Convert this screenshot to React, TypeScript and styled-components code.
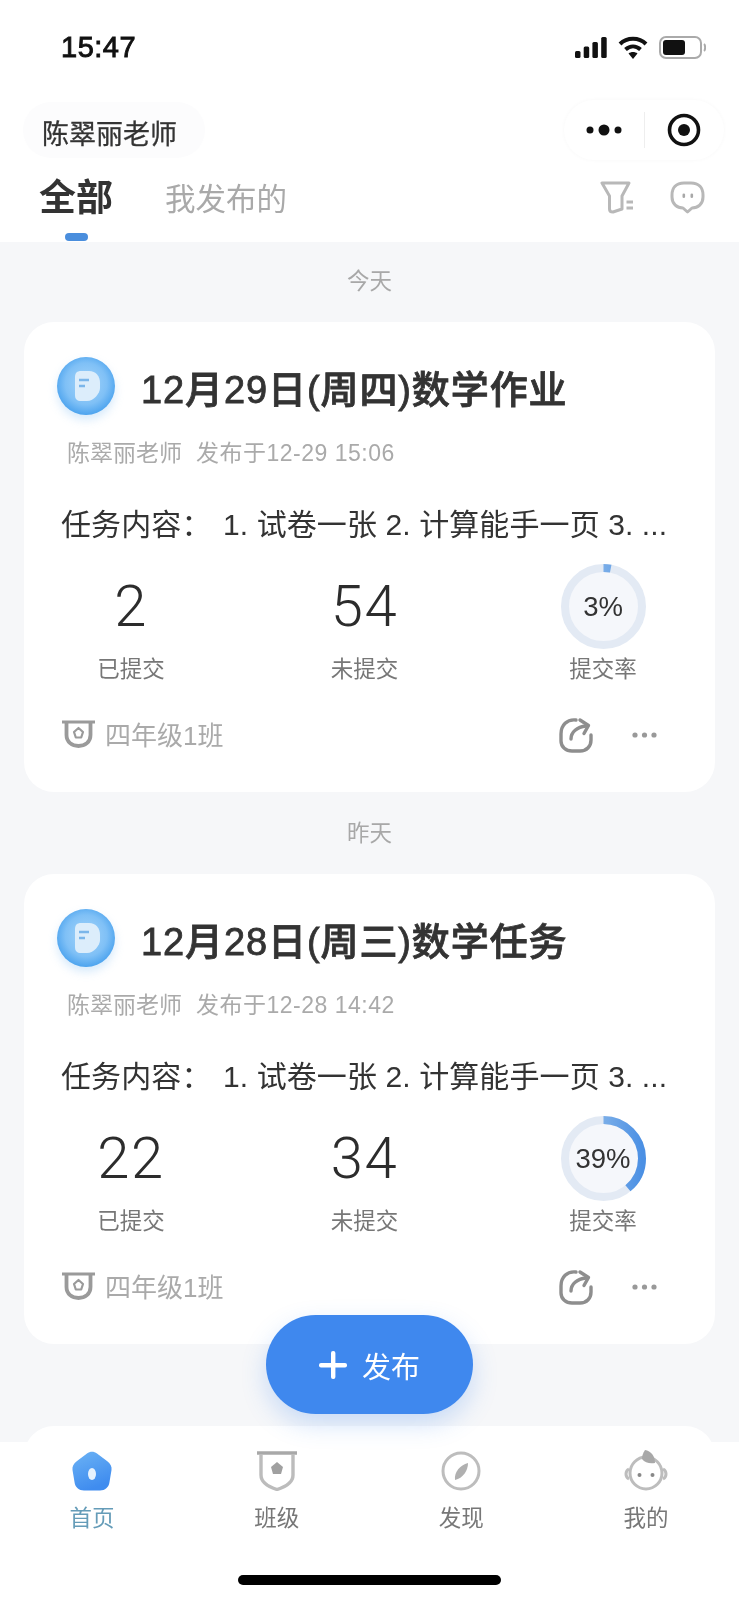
import React from 'react';
import styled, { createGlobalStyle } from 'styled-components';

const GlobalStyle = createGlobalStyle`
  html, body {
    margin: 0;
    padding: 0;
    background: #fff;
    font-family: 'Liberation Sans', 'Noto Sans CJK SC', sans-serif;
  }
`;

const Page = styled.div`
  position: relative;
  width: 739px;
  height: 1600px;
  overflow: hidden;
  display: flex;
  flex-direction: column;
  background: #f6f7f9;
  filter: blur(0.4px);
`;

const Header = styled.header`
  flex: none;
  height: 242px;
  background: #fff;
  display: flex;
  flex-direction: column;
`;

const StatusBar = styled.div`
  height: 100px;
  padding: 0 33px 6px 61px;
  box-sizing: border-box;
  display: flex;
  align-items: center;
  justify-content: space-between;
`;

const Clock = styled.span`
  font-size: 29px;
  font-weight: 500;
  letter-spacing: 0.5px;
  color: #111;
  -webkit-text-stroke: 0.9px #111;
`;

const StatusIcons = styled.div`
  display: flex;
  align-items: center;
  gap: 11px;
`;

const NavRow = styled.div`
  height: 60px;
  padding: 0 15px 0 23px;
  display: flex;
  align-items: center;
  justify-content: space-between;
`;

const NamePill = styled.div`
  width: 182px;
  height: 56px;
  padding: 5px 0 0 19px;
  box-sizing: border-box;
  border-radius: 28px;
  background: #fcfcfd;
  display: flex;
  align-items: center;
  font-size: 27px;
  color: #333;
  -webkit-text-stroke: 0.3px #333;
`;

const Capsule = styled.div`
  width: 160px;
  height: 60px;
  border-radius: 30px;
  background: #fff;
  box-shadow: 0 0 4px rgba(0, 0, 0, 0.03);
  display: flex;
  align-items: center;
`;

const CapsuleSide = styled.div`
  flex: 1;
  display: flex;
  align-items: center;
  justify-content: center;
`;

const CapsuleDivider = styled.div`
  width: 1px;
  height: 36px;
  background: #eee;
`;

const TabsRow = styled.div`
  flex: 1;
  padding: 15px 34px 0 39px;
  display: flex;
  align-items: flex-start;
  justify-content: space-between;
`;

const Tabs = styled.div`
  display: flex;
  gap: 52px;
`;

const Tab = styled.div<{ $active?: boolean }>`
  display: flex;
  flex-direction: column;
  align-items: center;
  height: 48px;
  line-height: 48px;
  font-size: ${({ $active }) => ($active ? '37px' : '30.5px')};
  font-weight: ${({ $active }) => ($active ? 700 : 400)};
  color: ${({ $active }) => ($active ? '#333' : '#a9a9a9')};
`;

const TabMark = styled.i`
  flex: none;
  width: 23px;
  height: 8px;
  margin-top: 10px;
  border-radius: 4px;
  background: #4a8edd;
`;

const TabTools = styled.div`
  display: flex;
  gap: 36px;
  padding-top: 6px;
`;

const Feed = styled.main`
  flex: 1;
  min-height: 0;
  overflow: hidden;
  padding: 25px 24px 0;
`;

const DateLabel = styled.div`
  height: 30px;
  line-height: 30px;
  margin: 0 0 25px;
  text-align: center;
  font-size: 22.5px;
  color: #a8a8a8;
`;

const Card = styled.article<{ $gap?: number }>`
  height: ${({ $gap }) => ($gap ? '200px' : 'auto')};
  margin-top: ${({ $gap }) => $gap ?? 0}px;
  margin-bottom: 27px;
  padding: 35px 0 39px;
  box-sizing: ${({ $gap }) => ($gap ? 'border-box' : 'content-box')};
  border-radius: 30px;
  background: #fff;
`;

const CardHead = styled.div`
  height: 58px;
  padding-left: 33px;
  display: flex;
  align-items: center;
  gap: 26px;
`;

const BadgeIcon = styled.svg`
  flex: none;
  overflow: visible;
  filter: drop-shadow(0 5px 5px rgba(74, 160, 238, 0.22));
`;

const CardTitle = styled.h2`
  margin: 0;
  font-size: 38px;
  font-weight: 500;
  letter-spacing: 0.9px;
  white-space: nowrap;
  color: #333;
  -webkit-text-stroke: 0.8px #333;
`;

const CardMeta = styled.div`
  height: 30px;
  line-height: 30px;
  margin: 23px 0 0 43px;
  display: flex;
  font-size: 23px;
  white-space: nowrap;
  color: #aaa;
`;

const PublishedAt = styled.span`
  margin-left: 14px;
  letter-spacing: 0.5px;
`;

const CardBody = styled.div`
  height: 40px;
  line-height: 40px;
  margin: 37px 0 0 37px;
  display: flex;
  font-size: 30px;
  letter-spacing: 0.1px;
  white-space: nowrap;
  color: #333;
`;

const BodyLabel = styled.span`
  width: 162px;
  flex: none;
`;

const Stats = styled.div`
  margin-top: 19px;
  padding-left: 47px;
  display: grid;
  grid-template-columns: 233.5px 238.5px 120px;
`;

const Stat = styled.div`
  width: 120px;
  display: flex;
  flex-direction: column;
  align-items: center;
`;

const StatValue = styled.div`
  height: 85px;
  line-height: 85px;
  font-family: Roboto, 'Liberation Sans', sans-serif;
  font-size: 58px;
  font-weight: 300;
  letter-spacing: 1.5px;
  color: #2c2c2c;
`;

const StatLabel = styled.div`
  height: 30px;
  line-height: 30px;
  margin-top: 6px;
  font-size: 22.5px;
  color: #777;
`;

const Ring = styled.div`
  width: 85px;
  height: 85px;
  display: grid;
  place-items: center;
  & > * {
    grid-area: 1 / 1;
  }
`;

const RingValue = styled.span`
  font-size: 27.5px;
  color: #333;
`;

const CardFoot = styled.div`
  height: 36px;
  margin-top: 32px;
  padding: 0 58px 0 38px;
  display: flex;
  align-items: center;
  justify-content: space-between;
`;

const ClassTag = styled.div`
  display: flex;
  align-items: center;
  gap: 10px;
  margin-top: -3px;
  font-size: 26px;
  color: #aaa;
`;

const CardActions = styled.div`
  display: flex;
  align-items: center;
  gap: 38px;
`;

const PublishButton = styled.button`
  position: absolute;
  left: 266px;
  top: 1315px;
  width: 207px;
  height: 99px;
  padding: 0;
  border: 0;
  border-radius: 50px;
  background: #3f88ee;
  box-shadow: 0 10px 24px rgba(63, 136, 238, 0.25);
  display: flex;
  align-items: center;
  justify-content: center;
  gap: 15px;
  font-family: inherit;
  font-size: 29px;
  color: #fff;
`;

const TabBar = styled.nav`
  flex: none;
  position: relative;
  height: 158px;
  background: #fff;
  padding: 8px 47px 0 46px;
  box-sizing: border-box;
  display: flex;
  justify-content: space-between;
  align-items: flex-start;
`;

const TabItem = styled.div<{ $active?: boolean }>`
  width: 92px;
  display: flex;
  flex-direction: column;
  align-items: center;
  font-size: 22.5px;
  color: ${({ $active }) => ($active ? '#659cb8' : '#777')};
`;

const TabItemIcon = styled.div`
  height: 42px;
  display: flex;
  align-items: center;
  margin-bottom: 8px;
`;

const HomeIndicator = styled.div`
  position: absolute;
  left: 238px;
  bottom: 15px;
  width: 263px;
  height: 10px;
  border-radius: 5px;
  background: #000;
`;

const SignalIcon = () => (
  <svg width="32" height="21" viewBox="0 0 32 21">
    <rect x="0" y="14" width="5.5" height="7" rx="1.5" fill="#111" />
    <rect x="8.7" y="9.5" width="5.5" height="11.5" rx="1.5" fill="#111" />
    <rect x="17.4" y="5" width="5.5" height="16" rx="1.5" fill="#111" />
    <rect x="26.2" y="0" width="5.5" height="21" rx="1.5" fill="#111" />
  </svg>
);

const WifiIcon = () => (
  <svg width="30" height="23" viewBox="0 0 30 23" fill="none" stroke="#111" strokeWidth="4">
    <path d="M2 8 C9 1 21 1 28 8" />
    <path d="M7.5 13.5 C12 9.5 18 9.5 22.5 13.5" />
    <path d="M15 23 L10.5 17.5 C13 15.5 17 15.5 19.5 17.5 Z" fill="#111" stroke="none" />
  </svg>
);

const BatteryIcon = () => (
  <svg width="47" height="23" viewBox="0 0 47 23" fill="none">
    <rect x="1" y="1" width="41" height="21" rx="6" stroke="#aaa" strokeWidth="2" />
    <rect x="4" y="4" width="22" height="15" rx="3" fill="#111" />
    <path d="M45 8 C46.5 9 46.5 14 45 15" stroke="#aaa" strokeWidth="2" />
  </svg>
);

const MoreDotsIcon = () => (
  <svg width="36" height="14" viewBox="0 0 36 14" fill="#111">
    <circle cx="4" cy="7" r="3.5" />
    <circle cx="18" cy="7" r="5.5" />
    <circle cx="32" cy="7" r="3.5" />
  </svg>
);

const TargetIcon = () => (
  <svg width="34" height="34" viewBox="0 0 34 34">
    <circle cx="17" cy="17" r="14.5" fill="none" stroke="#111" strokeWidth="3.6" />
    <circle cx="17" cy="17" r="6" fill="#111" />
  </svg>
);

const FilterIcon = () => (
  <svg width="34" height="33" viewBox="0 0 34 33" fill="none" stroke="#b8b8b8" strokeWidth="3" strokeLinejoin="round">
    <path d="M2 2 H29 L22 15 V28 L13 31 C11 31 9.5 30 9.5 28 V15 Z" />
    <path d="M26.5 21 H33 M26.5 27 H33" />
  </svg>
);

const ChatIcon = () => (
  <svg width="35" height="33" viewBox="0 0 35 33" fill="none">
    <path
      d="M14 2 H21 C29 2 33 7 33 14 V16 C33 23 28 27 22 27 L17.5 31 L13 27 C7 27 2 23 2 16 V14 C2 7 6 2 14 2 Z"
      stroke="#b8b8b8"
      strokeWidth="3"
      strokeLinejoin="round"
    />
    <rect x="12.5" y="12.5" width="2.6" height="4.5" rx="1.3" fill="#a8a8a8" />
    <rect x="20.5" y="12.5" width="2.6" height="4.5" rx="1.3" fill="#a8a8a8" />
  </svg>
);

const DocBadge = ({ id }: { id: string }) => (
  <BadgeIcon width="58" height="58" viewBox="0 0 58 58">
    <defs>
      <radialGradient id={id} cx="50%" cy="46%" r="55%">
        <stop offset="0%" stopColor="#a5d5fa" />
        <stop offset="65%" stopColor="#7fc0f6" />
        <stop offset="100%" stopColor="#4aa2ee" />
      </radialGradient>
    </defs>
    <circle cx="29" cy="29" r="29" fill={`url(#${id})`} />
    <path d="M18 20 C18 16 20 14 24 14 H32 C39 14 43 19 43 26 V31 C43 36 37 44 30 44 H24 C20 44 18 42 18 38 Z" fill="#dcedfb" />
    <path d="M22 23 H32 M22 29 H28" stroke="#7bb6ea" strokeWidth="2.4" />
  </BadgeIcon>
);

const ClassIcon = () => (
  <svg width="33" height="28" viewBox="0 0 33 28" fill="none" stroke="#9a9a9a">
    <path d="M0 2 H33" strokeWidth="3" />
    <path d="M4.5 3 V15 C4.5 22 10 26 16.5 26 C23 26 28.5 22 28.5 15 V3" strokeWidth="3.8" />
    <path d="M16.5 8 L21 12 L19.2 17.5 H13.8 L12 12 Z" strokeWidth="2.2" strokeLinejoin="round" />
  </svg>
);

const ShareIcon = () => (
  <svg width="36" height="36" viewBox="0 0 36 36" fill="none" stroke="#8e8e8e" strokeWidth="3.4" strokeLinecap="round" strokeLinejoin="round">
    <path d="M18 3 C9 2 3 8 3 17 V24 C3 30 8 34 14 34 H22 C29 34 33 29 33 23 V18" />
    <path d="M13 22 C13 15 19 10 28 9" />
    <path d="M22 3 L30.5 8.5 L26 16.5" />
  </svg>
);

const EllipsisIcon = () => (
  <svg width="25" height="6" viewBox="0 0 25 6" fill="#999">
    <circle cx="3" cy="3" r="2.6" />
    <circle cx="12.5" cy="3" r="2.6" />
    <circle cx="22" cy="3" r="2.6" />
  </svg>
);

const ProgressRing = ({ percent, id }: { percent: number; id: string }) => {
  const radius = 38.5;
  const length = 2 * Math.PI * radius;
  return (
    <svg width="85" height="85" viewBox="0 0 85 85">
      <defs>
        <linearGradient id={id} x1="0" y1="0" x2="0" y2="1">
          <stop offset="0%" stopColor="#a9cbec" />
          <stop offset="100%" stopColor="#4b90e4" />
        </linearGradient>
      </defs>
      <circle cx="42.5" cy="42.5" r={radius} fill="#f5f7fb" stroke="#e3eaf4" strokeWidth="8" />
      <circle
        cx="42.5"
        cy="42.5"
        r={radius}
        fill="none"
        stroke={`url(#${id})`}
        strokeWidth="8"
        strokeDasharray={`${(length * percent) / 100} ${length}`}
        transform="rotate(-90 42.5 42.5)"
      />
    </svg>
  );
};

const PlusIcon = () => (
  <svg width="28" height="28" viewBox="0 0 28 28" fill="#fff">
    <rect x="12" y="0" width="4.4" height="28" rx="2" />
    <rect x="0" y="12" width="28" height="4.4" rx="2" />
  </svg>
);

const HomeTabIcon = () => (
  <svg width="40" height="40" viewBox="0 0 40 40">
    <defs>
      <linearGradient id="home-fill" x1="0" y1="0" x2="0.4" y2="1">
        <stop offset="0%" stopColor="#6cb3f5" />
        <stop offset="100%" stopColor="#3f8cef" />
      </linearGradient>
    </defs>
    <path
      d="M15 2.5 C18 0 22 0 25 2.5 L35 10 C38.5 12.5 40 15.5 39.5 19 L37.5 31 C36.8 36.5 33 39.5 28 39.5 H12 C7 39.5 3.2 36.5 2.5 31 L0.5 19 C0 15.5 1.5 12.5 5 10 Z"
      fill="url(#home-fill)"
    />
    <ellipse cx="20" cy="23" rx="4" ry="6" fill="#e7f2fd" />
  </svg>
);

const ClassTabIcon = () => (
  <svg width="40" height="40" viewBox="0 0 40 40" fill="none">
    <path d="M0 2 H40" stroke="#a8a8a8" strokeWidth="3.4" />
    <path d="M4 3 V24 C4 32 12 36 20 38.5 C28 36 36 32 36 24 V3" stroke="#bcbcbc" strokeWidth="3.4" />
    <path d="M20 11 L26 16 L24 23 H16 L14 16 Z" fill="#a0a0a0" strokeLinejoin="round" />
  </svg>
);

const CompassTabIcon = () => (
  <svg width="40" height="40" viewBox="0 0 40 40" fill="none">
    <circle cx="20" cy="20" r="18" stroke="#bdbdbd" strokeWidth="3" />
    <path d="M27 12 C27 20 22 27 14 29 C13 21 19 14 27 12 Z" fill="#b0b0b0" />
  </svg>
);

const ProfileTabIcon = () => (
  <svg width="44" height="42" viewBox="0 0 44 42" fill="none">
    <circle cx="22" cy="23" r="16" stroke="#bdbdbd" strokeWidth="3" />
    <path d="M5 19 C1 21 1 27 5 29 M39 19 C43 21 43 27 39 29" stroke="#bdbdbd" strokeWidth="3" />
    <path d="M21 0 C27 1 31 6 31 13 C26 14 21 13 18 9 C18 6 19 3 21 0 Z" fill="#a8a8a8" />
    <circle cx="15.5" cy="25" r="2" fill="#888" />
    <circle cx="28.5" cy="25" r="2" fill="#888" />
  </svg>
);

type TaskData = {
  id: string;
  day: string;
  title: string;
  published: string;
  submitted: number;
  pending: number;
  rate: number;
};

const TASKS: TaskData[] = [
  { id: 'a', day: '今天', title: '12月29日(周四)数学作业', published: '发布于12-29 15:06', submitted: 2, pending: 54, rate: 3 },
  { id: 'b', day: '昨天', title: '12月28日(周三)数学任务', published: '发布于12-28 14:42', submitted: 22, pending: 34, rate: 39 },
];

const TaskCard = ({ task }: { task: TaskData }) => (
  <Card>
    <CardHead>
      <DocBadge id={`badge-${task.id}`} />
      <CardTitle>{task.title}</CardTitle>
    </CardHead>
    <CardMeta>
      陈翠丽老师
      <PublishedAt>{task.published}</PublishedAt>
    </CardMeta>
    <CardBody>
      <BodyLabel>任务内容：</BodyLabel>
      <span>1. 试卷一张 2. 计算能手一页 3. ...</span>
    </CardBody>
    <Stats>
      <Stat>
        <StatValue>{task.submitted}</StatValue>
        <StatLabel>已提交</StatLabel>
      </Stat>
      <Stat>
        <StatValue>{task.pending}</StatValue>
        <StatLabel>未提交</StatLabel>
      </Stat>
      <Stat>
        <Ring>
          <ProgressRing percent={task.rate} id={`ring-${task.id}`} />
          <RingValue>{task.rate}%</RingValue>
        </Ring>
        <StatLabel>提交率</StatLabel>
      </Stat>
    </Stats>
    <CardFoot>
      <ClassTag>
        <ClassIcon />
        四年级1班
      </ClassTag>
      <CardActions>
        <ShareIcon />
        <EllipsisIcon />
      </CardActions>
    </CardFoot>
  </Card>
);

const App = () => (
  <Page>
    <GlobalStyle />
    <Header>
      <StatusBar>
        <Clock>15:47</Clock>
        <StatusIcons>
          <SignalIcon />
          <WifiIcon />
          <BatteryIcon />
        </StatusIcons>
      </StatusBar>
      <NavRow>
        <NamePill>陈翠丽老师</NamePill>
        <Capsule>
          <CapsuleSide>
            <MoreDotsIcon />
          </CapsuleSide>
          <CapsuleDivider />
          <CapsuleSide>
            <TargetIcon />
          </CapsuleSide>
        </Capsule>
      </NavRow>
      <TabsRow>
        <Tabs>
          <Tab $active>
            全部
            <TabMark />
          </Tab>
          <Tab>我发布的</Tab>
        </Tabs>
        <TabTools>
          <FilterIcon />
          <ChatIcon />
        </TabTools>
      </TabsRow>
    </Header>
    <Feed>
      {TASKS.map((task) => (
        <React.Fragment key={task.id}>
          <DateLabel>{task.day}</DateLabel>
          <TaskCard task={task} />
        </React.Fragment>
      ))}
      <Card $gap={82} />
    </Feed>
    <TabBar>
      <TabItem $active>
        <TabItemIcon>
          <HomeTabIcon />
        </TabItemIcon>
        首页
      </TabItem>
      <TabItem>
        <TabItemIcon>
          <ClassTabIcon />
        </TabItemIcon>
        班级
      </TabItem>
      <TabItem>
        <TabItemIcon>
          <CompassTabIcon />
        </TabItemIcon>
        发现
      </TabItem>
      <TabItem>
        <TabItemIcon>
          <ProfileTabIcon />
        </TabItemIcon>
        我的
      </TabItem>
      <HomeIndicator />
    </TabBar>
    <PublishButton>
      <PlusIcon />
      发布
    </PublishButton>
  </Page>
);

export default App;
